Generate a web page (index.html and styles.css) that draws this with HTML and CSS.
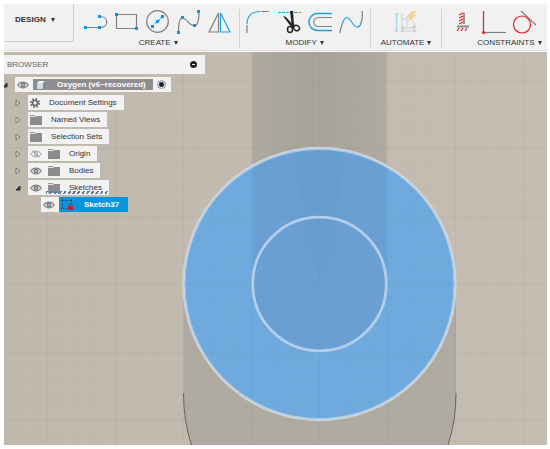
FILE: index.html
```
<!DOCTYPE html>
<html lang="en">
  <head>
    <meta charset="utf-8" />
    <title>Oxygen (v6~recovered)</title>
    <link rel="stylesheet" href="styles.css">
  </head>
  <body>
    <!-- Shared tree icons -->
    <svg class="symbols" aria-hidden="true">
      <symbol id="eye" viewBox="0 0 12 10">
        <path d="M.7 5C3 1.2 9 1.2 11.3 5 9 8.8 3 8.8.7 5z" fill="#ddd" stroke="#888" stroke-width="1.1" />
        <circle cx="6" cy="5" r="2.4" fill="#808080" />
        <circle cx="6" cy="5" r=".8" fill="#ddd" />
      </symbol>
      <symbol id="eye-off" viewBox="0 0 12 10">
        <path d="M.7 5C3 1.2 9 1.2 11.3 5 9 8.8 3 8.8.7 5z" fill="none" stroke="#999" />
        <circle cx="6" cy="5" r="1.8" fill="none" stroke="#999" stroke-width=".8" />
        <path d="M2.5 1.5l7 7" stroke="#999" />
      </symbol>
      <symbol id="folder" viewBox="0 0 12 10">
        <path d="M0 2h5l1-1h6v9H0z" fill="#8c8c8c" />
        <path d="M0 .5h5" stroke="#999" />
        <path d="M0 1.5h5" stroke="#ddd" stroke-width=".6" />
      </symbol>
      <symbol id="closed" viewBox="0 0 6 8">
        <path d="M1 1l4 3-4 3z" fill="#d5cec4" stroke="#6b6760" stroke-width=".8" />
      </symbol>
      <symbol id="open" viewBox="0 0 6 8">
        <path d="M5 2v4H1z" fill="#555" stroke="#222" />
      </symbol>
    </svg>

    <div class="app">
      <header class="toolbar">
        <button class="workspace" type="button">DESIGN <span class="caret"></span></button>

        <div class="group">
          <div class="tools">
            <button class="tool" type="button" aria-label="Line">
              <svg viewBox="0 0 24 24">
                <path class="gray" d="M1 17.5h15M16 6.5c9 0 9 11 0 11" />
                <path class="dots" d="M0 16h3v3H0zM14 16h3v3h-3zM14 5h3v3h-3z" />
              </svg>
            </button>
            <button class="tool" type="button" aria-label="Rectangle">
              <svg viewBox="0 0 24 24">
                <path class="gray" d="M1.5 4.5h20v14h-20z" />
                <path class="dots" d="M0 3h3v3H0zM20 17h3v3h-3z" />
              </svg>
            </button>
            <button class="tool" type="button" aria-label="Circle">
              <svg viewBox="0 0 24 24">
                <circle class="gray" cx="11.5" cy="11.5" r="10.8" />
                <path class="blue" d="M6 17L17 6" stroke-dasharray="3 1" />
                <path class="dots" d="M5 15h3v3H5zM10 10h3v3h-3zM15 5h3v3h-3z" />
              </svg>
            </button>
            <button class="tool" type="button" aria-label="Spline">
              <svg viewBox="0 0 24 24">
                <path class="gray" d="M1.5 22C1.5 15 2.5 8 5.5 8c4 0 8 9 12.5 8 3-1 4-7 4-14" />
                <path class="dots" d="M0 21h3v3H0zM4 6h3v3H4zM16 14h3v3h-3zM20 0h3v3h-3z" />
              </svg>
            </button>
            <button class="tool" type="button" aria-label="Mirror">
              <svg viewBox="0 0 24 24">
                <path class="gray" d="M10.5 3v19H1z" />
                <path class="blue" d="M12.5 3v19H22z" />
              </svg>
            </button>
          </div>
          <button class="menu" type="button">CREATE <span class="caret"></span></button>
        </div>

        <div class="group">
          <div class="tools">
            <button class="tool" type="button" aria-label="Fillet">
              <svg viewBox="0 0 24 24">
                <path class="blue" d="M1 14C1 6 6 1.5 14 1.5" />
                <path class="gray" d="M1 15v8M15 1.5h8" />
              </svg>
            </button>
            <button class="tool" type="button" aria-label="Trim">
              <svg viewBox="0 0 24 24">
                <path class="blue" d="M1 2.5h13" stroke-dasharray="3 1" />
                <path class="gray" d="M17 2.5h7" stroke-dasharray="4 1" />
                <path d="M13 1h3l1 14-2 3z" fill="#222" />
                <path d="M6 6l3 1 9 10-3 1z" fill="#222" />
                <ellipse class="scissor" cx="13" cy="19.5" rx="2.5" ry="3" />
                <ellipse class="scissor" cx="19.5" cy="18" rx="3" ry="2.5" transform="rotate(35 19.5 18)" />
              </svg>
            </button>
            <button class="tool" type="button" aria-label="Offset">
              <svg viewBox="0 0 24 24">
                <path class="blue thick" d="M24 3.5H10c-12 0-12 17 0 17h14" />
                <path class="gray" d="M24 7.5H11c-7 0-7 9 0 9h13" />
              </svg>
            </button>
            <button class="tool" type="button" aria-label="Curve">
              <svg viewBox="0 0 24 24">
                <path class="gray" d="M1 23q0-4 2-8M22 13q2-5 1-12" />
                <path class="blue" d="M3 15C8-3 13 17 18 17q3 0 4-4" />
              </svg>
            </button>
          </div>
          <button class="menu" type="button">MODIFY <span class="caret"></span></button>
        </div>

        <div class="group automate">
          <div class="tools">
            <button class="tool" type="button" aria-label="Automated sketch" disabled>
              <svg viewBox="0 0 24 24">
                <g fill="none" stroke="#c9cdd0">
                  <path d="M8 4v14h13M8 9h5M13 7v10M14 8c5 1 7 5 7 10M8 21h14" />
                  <path d="M7 20h2v2H7zM20 20h2v2h-2zM8 17h2v2H8zM19 16h2v2h-2z" />
                </g>
                <path d="M2.5 4v17M1 4h3M1 21h3" fill="none" stroke="#a5d8f2" stroke-width="1.5" />
                <path d="M18 1l-6 6h4l-2 5 9-7h-4l4-4z" fill="#f8d09a" />
              </svg>
            </button>
          </div>
          <button class="menu" type="button">AUTOMATE <span class="caret"></span></button>
        </div>

        <div class="group constraints">
          <div class="tools">
            <button class="tool" type="button" aria-label="Fix">
              <svg viewBox="0 0 24 24">
                <path d="M13 2.5V14" stroke="#777" stroke-width="1.5" />
                <path class="red" d="M8 5l4-2M8 8l4-2M8 11l4-2M8 14l4-2" />
                <path d="M6 16.5h12" stroke="#888" stroke-width="2" />
                <path class="red" d="M6 21l2-3M10 21l2-3M14 21l2-3" />
              </svg>
            </button>
            <button class="tool" type="button" aria-label="Perpendicular">
              <svg viewBox="0 0 24 24">
                <path class="gray" d="M2 22.5h22" />
                <path class="red" d="M1.5 1v22" />
                <circle cx="1.5" cy="22.5" r="1.5" fill="#e81c24" />
              </svg>
            </button>
            <button class="tool" type="button" aria-label="Tangent">
              <svg viewBox="0 0 24 24">
                <circle class="red" cx="9" cy="14.5" r="8.5" />
                <path class="gray" d="M8 1l15 14" />
              </svg>
            </button>
          </div>
          <button class="menu" type="button">CONSTRAINTS <span class="caret"></span></button>
        </div>
      </header>

      <main class="viewport">
        <!-- Sketch canvas -->
        <svg class="canvas" viewBox="4 52 543 393" preserveAspectRatio="xMidYMid slice">
          <defs>
            <pattern id="minor" x="319.5" y="284" width="13.6" height="13.6" patternUnits="userSpaceOnUse">
              <path d="M0 0H13.6M0 0V13.6" stroke="#8a8270" stroke-opacity=".16" fill="none" />
            </pattern>
            <pattern id="major" x="319" y="283.5" width="68" height="68" patternUnits="userSpaceOnUse">
              <path d="M0 .5H68M.5 0V68" stroke="#706a5c" stroke-opacity=".17" fill="none" />
            </pattern>
            <linearGradient id="ground" x1="0" y1="0" x2="1" y2="0">
              <stop offset="0" stop-color="#c0b9ae" />
              <stop offset="1" stop-color="#c5bdb1" />
            </linearGradient>
            <linearGradient id="tube" x1="0" y1="0" x2="1" y2="0">
              <stop offset="0" stop-color="#aea9a1" />
              <stop offset=".45" stop-color="#a7a29a" />
              <stop offset="1" stop-color="#b0aaa1" />
            </linearGradient>
          </defs>
          <rect x="4" y="52" width="543" height="393" fill="url(#ground)" />
          <path d="M183.5 284h272.5V395q-1 28-8 50H191q-7-22-7.500-50z" fill="#b0aba2" />
          <rect x="252.5" y="52" width="134" height="232" fill="url(#tube)" />
          <path d="M183.5 393q0 28 8 52M456 393q0 28-8 52" fill="none" stroke="#65625d" />
          <circle cx="319.5" cy="284" r="135.5" fill="#6eaadd" />
          <path d="M252.5 166.2a135.5 135.5 0 0 1 134 0V284a67 67 0 0 1-134 0z" fill="#699fd3" />
          <path d="M297 151h45q-2 90-21 129-20-40-24-129z" fill="#659ace" fill-opacity=".25" />
          <rect x="4" y="52" width="543" height="393" fill="url(#minor)" opacity=".6" />
          <rect x="4" y="52" width="543" height="393" fill="url(#major)" opacity=".45" />
          <circle cx="319.5" cy="284" r="136" fill="none" stroke="#cbd2da" stroke-width="2.5" />
          <circle cx="319.5" cy="284" r="134.5" fill="none" stroke="#a6c9ec" />
          <circle cx="319.5" cy="284" r="66.8" fill="none" stroke="#b3cdea" stroke-width="2.8" />
        </svg>

        <aside class="browser">
          <div class="browser-head">
            <span>BROWSER</span>
            <button class="collapse" type="button" aria-label="Collapse browser"></button>
          </div>
          <ul class="tree">
            <li class="row root">
              <svg class="toggle"><use href="#open" /></svg>
              <div class="item">
                <svg class="icon"><use href="#eye" /></svg>
                <span class="document">
                  <svg class="cube" viewBox="0 0 10 10">
                    <path d="M0 3l3-3h7v7l-3 3H0z" fill="#7f8791" />
                    <path d="M1 3l2-2h6L7 3z" fill="#f4f6f8" />
                    <path d="M1 3h6v6H1z" fill="#d3dae3" />
                  </svg>
                  <span>Oxygen (v6~recovered)</span>
                </span>
                <input class="activate" type="radio" name="component" aria-label="Activate Oxygen" checked />
              </div>
            </li>
            <li class="row">
              <svg class="toggle"><use href="#closed" /></svg>
              <div class="item">
                <svg class="gear" viewBox="0 0 10 10">
                  <circle cx="5" cy="5" r="4" fill="none" stroke="#666" stroke-width="2" stroke-dasharray="1.6 1.54" />
                  <circle cx="5" cy="5" r="2.5" fill="none" stroke="#666" stroke-width="1.6" />
                </svg>
                <span class="label">Document Settings</span>
              </div>
            </li>
            <li class="row">
              <svg class="toggle"><use href="#closed" /></svg>
              <div class="item">
                <svg class="icon"><use href="#folder" /></svg>
                <span class="label">Named Views</span>
              </div>
            </li>
            <li class="row">
              <svg class="toggle"><use href="#closed" /></svg>
              <div class="item">
                <svg class="icon"><use href="#folder" /></svg>
                <span class="label">Selection Sets</span>
              </div>
            </li>
            <li class="row">
              <svg class="toggle"><use href="#closed" /></svg>
              <div class="item">
                <svg class="icon"><use href="#eye-off" /></svg>
                <svg class="icon"><use href="#folder" /></svg>
                <span class="label">Origin</span>
              </div>
            </li>
            <li class="row">
              <svg class="toggle"><use href="#closed" /></svg>
              <div class="item">
                <svg class="icon"><use href="#eye" /></svg>
                <svg class="icon"><use href="#folder" /></svg>
                <span class="label">Bodies</span>
              </div>
            </li>
            <li class="row">
              <svg class="toggle"><use href="#open" /></svg>
              <div class="item editing">
                <svg class="icon"><use href="#eye" /></svg>
                <svg class="icon"><use href="#folder" /></svg>
                <span class="label">Sketches</span>
              </div>
            </li>
            <li class="row child">
              <div class="item">
                <svg class="icon"><use href="#eye" /></svg>
                <span class="selected">
                  <svg class="sketch" viewBox="0 0 14 13">
                    <path d="M2.5 1v10M1 2.5h11M11.5 1v6M1 10.5h6" fill="none" stroke="#27587c" stroke-dasharray="3 1" />
                    <path d="M9 8V6.500q1.500-1.500 3 0V8" fill="none" stroke="#a03048" />
                    <path d="M8 8h5v4H8z" fill="#c3203c" />
                  </svg>
                  <span>Sketch37</span>
                </span>
              </div>
            </li>
          </ul>
        </aside>
      </main>
    </div>
  </body>
</html>
```

FILE: styles.css
```
* {
  box-sizing: border-box;
}

body {
  margin: 0;
  background-color: #fff;
  color: #333;
  font-family: "Liberation Sans", Arial, sans-serif;
  font-size: 8px;
  line-height: 10px;
}

button {
  margin: 0;
  padding: 0;
  border: none;
  background: none;
  color: inherit;
  font: inherit;
}

svg {
  display: block;
}

.symbols {
  position: absolute;
  width: 0;
  height: 0;
}

.app {
  display: flex;
  flex-direction: column;
  height: 100vh;
  padding: 4px 3px 4px 4px;
}

/* Toolbar */
.toolbar {
  display: flex;
  flex: none;
  overflow: hidden;
  padding-bottom: 3px;
  background-color: #f1f1f1;
  border-bottom: 1px solid #fafafa;
  box-shadow: inset 0 -1px #dcdcdc;
}

.workspace {
  display: flex;
  flex: none;
  align-items: center;
  align-self: flex-start;
  gap: 5px;
  height: 38px;
  margin-right: 4px;
  padding: 0 18px 5px 11px;
  border-right: 1px solid #ccc;
  border-bottom: 1px solid #ccc;
  border-bottom-right-radius: 3px;
  font-weight: bold;
}

.caret {
  border: 2px solid transparent;
  border-top: 4px solid #333;
  border-bottom: none;
}

.group {
  display: flex;
  flex: none;
  flex-direction: column;
  align-items: center;
  gap: 4px;
  margin-top: 5px;
  padding: 0 3px;
  border-right: 1px solid #d2d2d2;
}

.automate {
  padding: 0 10px;
}

.constraints {
  padding-left: 5px;
  border-right: none;
}

.tools {
  display: flex;
}

.constraints .tools {
  width: 124px;
}

.tool {
  display: flex;
  justify-content: center;
  width: 31px;
  padding-top: 1px;
}

.tool svg {
  width: 24px;
  height: 24px;
}

.menu {
  display: flex;
  align-items: center;
  gap: 3px;
}

.gray,
.blue,
.red,
.scissor {
  fill: none;
  stroke: #808080;
  stroke-width: 1.2;
}

.blue {
  stroke: #1ea0e6;
}

.thick {
  stroke-width: 1.5;
}

.red {
  stroke: #e81c24;
}

.scissor {
  stroke: #222;
  stroke-width: 1.5;
}

.dots {
  fill: #0c93e4;
}

/* Canvas with the browser panel on top */
.viewport {
  display: grid;
  flex: 1;
  min-height: 0;
  overflow: hidden;
}

.canvas,
.browser {
  grid-area: 1 / 1;
}

.canvas {
  width: 100%;
  height: 100%;
  min-height: 0;
}

.browser {
  z-index: 1;
  justify-self: start;
  align-self: start;
  width: 201px;
  padding-top: 3px;
}

.browser-head {
  display: flex;
  align-items: center;
  justify-content: space-between;
  height: 19px;
  padding: 0 8px 0 3px;
  background-color: #f2f2f2;
  color: #666;
}

.collapse {
  display: flex;
  align-items: center;
  justify-content: center;
  width: 7px;
  height: 7px;
  border-radius: 50%;
  background-color: #222;
}

.collapse::before {
  content: "";
  width: 3px;
  height: 1px;
  background-color: #eee;
}

/* Tree */
.tree {
  display: flex;
  flex-direction: column;
  gap: 2px;
  margin: 0;
  padding: 3px 0 0;
  list-style: none;
}

.row {
  display: flex;
  align-items: center;
  gap: 7px;
  height: 15px;
  padding-left: 11px;
}

/* The root arrow is cut by the panel edge */
.root {
  gap: 7px;
  margin-bottom: 1px;
  margin-left: -2px;
  padding-left: 0;
}

.child {
  padding-left: 37px;
}

.toggle {
  width: 6px;
  height: 8px;
}

.item {
  display: flex;
  align-items: center;
  gap: 6px;
  height: 15px;
  padding: 0 7px 0 2px;
  background-color: #f2f2f2;
  white-space: nowrap;
}

.icon {
  width: 12px;
  height: 10px;
}

.gear {
  width: 10px;
  height: 10px;
}

.label {
  margin-left: 3px;
}

.root .item {
  gap: 4px;
  padding-right: 5px;
}

.document {
  display: flex;
  align-items: center;
  gap: 11px;
  height: 11px;
  padding: 0 7px 0 3px;
  background-color: #8e8e8e;
  color: #fff;
  font-weight: bold;
}

.cube {
  width: 10px;
  height: 10px;
}

.activate {
  appearance: none;
  width: 9px;
  height: 9px;
  margin: 0;
  border: 1px solid #8f959c;
  border-radius: 50%;
  background: radial-gradient(circle, #222 0 2px, #dfe8f2 3px);
}

.child .item {
  gap: 4px;
  padding-right: 0;
}

.selected {
  display: flex;
  align-items: center;
  gap: 10px;
  height: 15px;
  padding: 0 9px 0 1px;
  background-color: #0c94da;
  color: #fff;
  font-weight: bold;
}

.sketch {
  width: 14px;
  height: 13px;
}

/* Hatched underline on the folder being edited */
.editing {
  position: relative;
}

.editing::after {
  content: "";
  position: absolute;
  right: 1px;
  bottom: 1px;
  left: 18px;
  height: 3px;
  background: repeating-linear-gradient(120deg, #5a7ba8 0 2px, transparent 2px 4px);
}
```
